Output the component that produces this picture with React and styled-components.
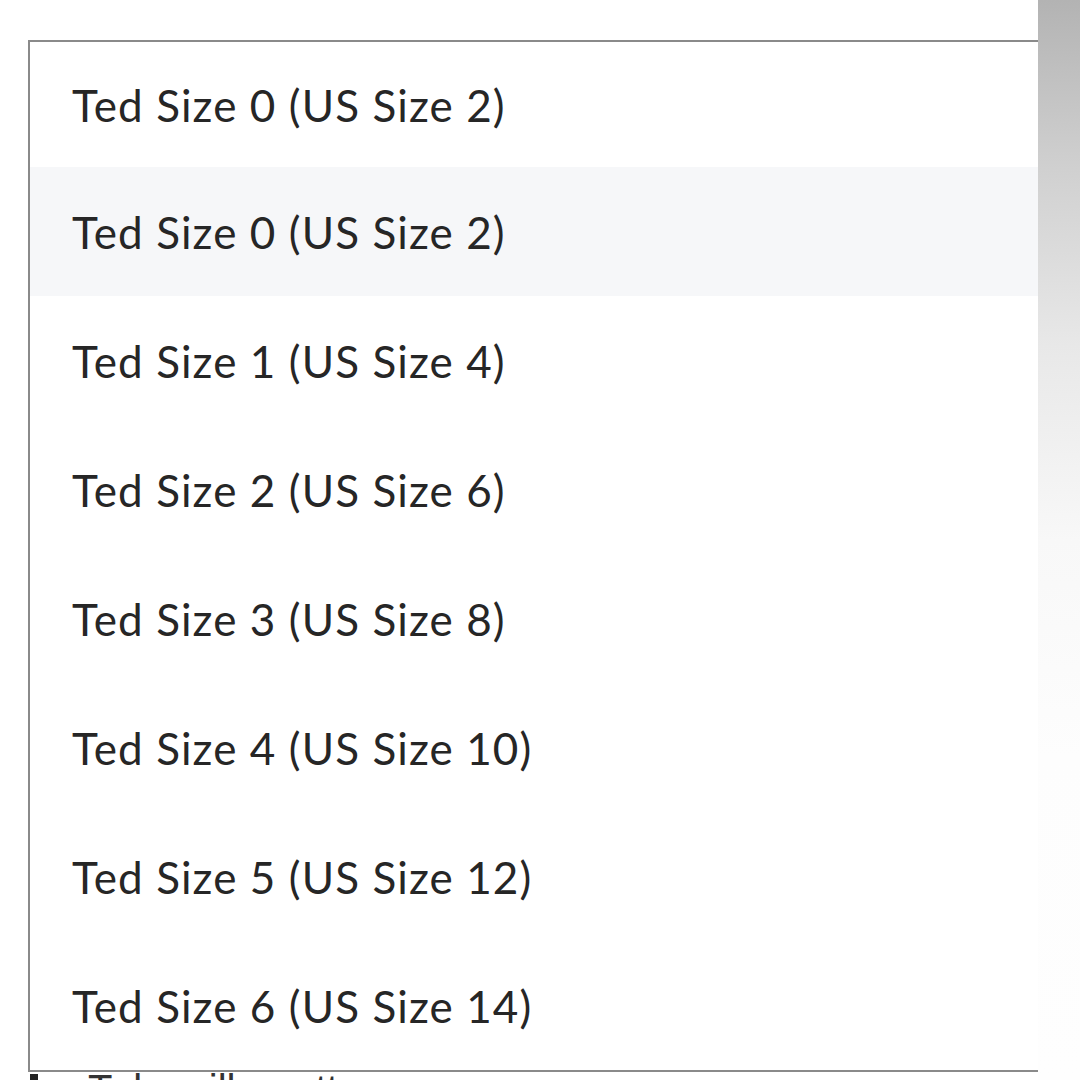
import styled, { createGlobalStyle } from "styled-components";

const GlobalStyle = createGlobalStyle`
  html, body {
    margin: 0;
    padding: 0;
    background: #ffffff;
  }
  body {
    font-family: "Lato", "Liberation Sans", sans-serif;
  }
`;

const sizes = [
  { ted: 0, us: 2 },
  { ted: 0, us: 2, active: true },
  { ted: 1, us: 4 },
  { ted: 2, us: 6 },
  { ted: 3, us: 8 },
  { ted: 4, us: 10 },
  { ted: 5, us: 12 },
  { ted: 6, us: 14 },
];

function App() {
  return (
    <>
      <GlobalStyle />
      <StPage>
        <StMain>
          <StList>
            {sizes.map((s, i) => (
              <StOption key={i} $active={s.active} $first={i === 0}>
                Ted Size {s.ted} (US Size {s.us})
              </StOption>
            ))}
          </StList>
          <StBehind>
            <span className="bullet" />
            Tube silhouette
          </StBehind>
        </StMain>
        <StScrollStrip />
      </StPage>
    </>
  );
}

export default App;

const StPage = styled.div`
  width: 1080px;
  height: 1080px;
  display: flex;
  overflow: hidden;
`;

const StMain = styled.div`
  flex: 1;
  padding: 40px 0 0 28px;
  display: flex;
  flex-direction: column;
`;

const StList = styled.div`
  border: 2px solid #8a8a8a;
  border-right: none;
  background: #ffffff;
  display: flex;
  flex-direction: column;
`;

const StOption = styled.div`
  height: ${(p) => (p.$first ? "125px" : "129px")};
  display: flex;
  align-items: center;
  padding-left: 42px;
  background: ${(p) => (p.$active ? "#f6f7f9" : "transparent")};
  color: #262626;
  font-size: 44px;
  letter-spacing: 1.1px;
  box-sizing: border-box;
`;

const StBehind = styled.div`
  display: flex;
  align-items: flex-start;
  margin-top: -3px;
  padding-left: 60px;
  font-family: "Liberation Sans", sans-serif;
  font-size: 40px;
  color: #333;
  line-height: 1;
  .bullet {
    width: 8px;
    height: 10px;
    background: #222;
    margin: 5px 50px 0 -58px;
  }
`;

const StScrollStrip = styled.div`
  width: 42px;
  flex-shrink: 0;
  background: linear-gradient(
    to bottom,
    #b3b3b3 0%,
    #cfcfcf 15%,
    #e8e8e8 32%,
    #f8f8f8 50%,
    #fdfdfd 70%,
    #fefefe 100%
  );
`;
